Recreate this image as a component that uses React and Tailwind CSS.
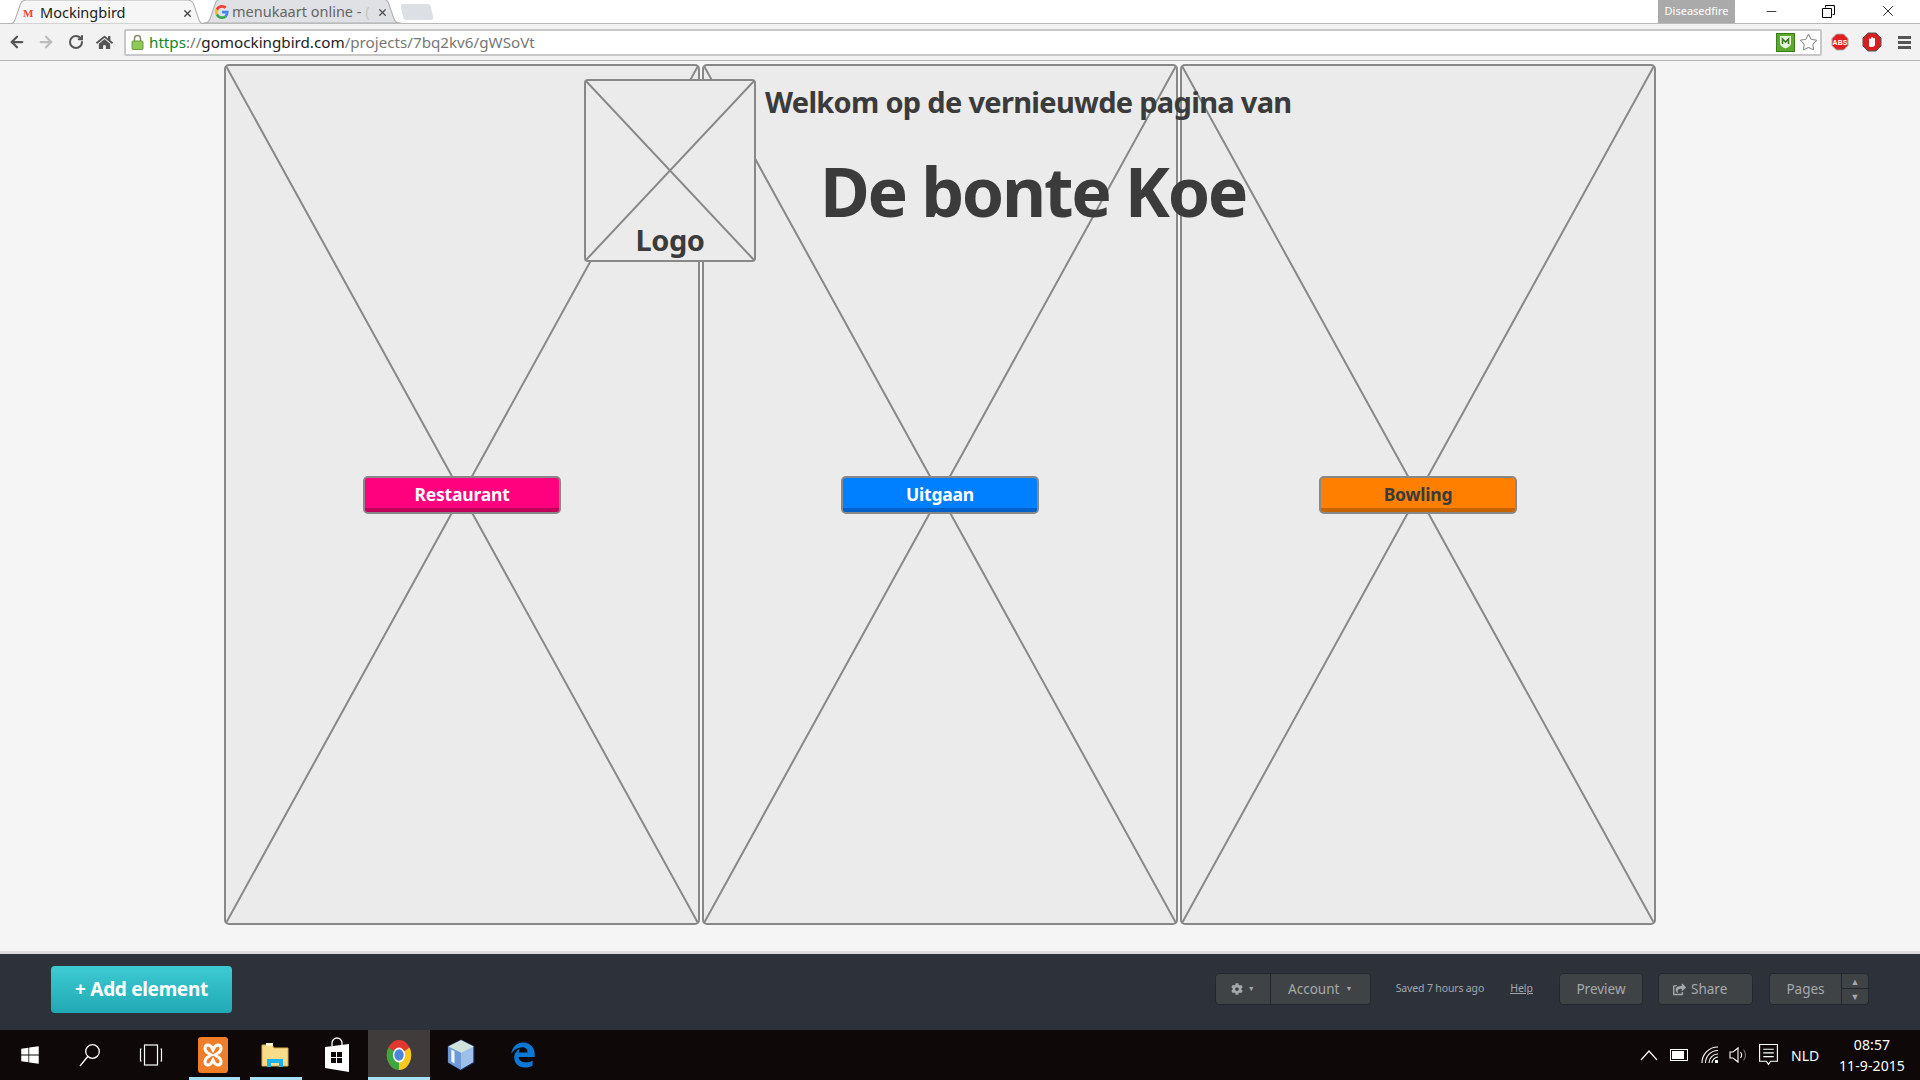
import React from "react";
import { ArrowLeft, ArrowRight, RotateCw, Star, Minus, X } from "lucide-react";
import { FaEdgeLegacy, FaWindows, FaHome, FaCog, FaShareSquare } from "react-icons/fa";

function CrossBox({ className }) {
  return (
    <svg
      className={`absolute inset-0 w-full h-full ${className || ""}`}
      viewBox="0 0 100 100"
      preserveAspectRatio="none"
    >
      <path d="M0 0 L100 100 M100 0 L0 100" stroke="#888888" strokeWidth="2" vectorEffect="non-scaling-stroke" fill="none" />
    </svg>
  );
}

function ImagePanel({ label, bg, under, text }) {
  return (
    <div className="relative w-[476px] h-[861px] bg-[#ebebeb] border-2 border-[#888888] rounded-[5px] flex items-center justify-center">
      <CrossBox />
      <div
        className={`relative w-[198px] h-[38px] border-2 border-[#888888] rounded-[5px] overflow-hidden flex items-center justify-center ${bg}`}
      >
        <div className={`absolute left-0 right-0 bottom-0 h-[4px] ${under}`} />
        <span className={`relative text-[17.500px] font-bold tracking-[-0.2px] ${text}`}>{label}</span>
      </div>
    </div>
  );
}

function TabShape({ fill, stroke }) {
  return (
    <svg className="absolute inset-0 w-full h-full" viewBox="0 0 190 24" preserveAspectRatio="none">
      <path d="M0 24 C5 24 6 22 7 19 L12 4 C13 1 15 0 18 0 L172 0 C175 0 177 1 178 4 L183 19 C184 22 185 24 190 24 Z" fill={fill} stroke={stroke} strokeWidth="1" />
    </svg>
  );
}

function GoogleG() {
  return (
    <svg width="14" height="14" viewBox="0 0 48 48" className="shrink-0">
      <path fill="#EA4335" d="M24 9.5c3.5 0 6.6 1.2 9.1 3.6l6.8-6.8C35.8 2.5 30.400 0 24 0 14.600 0 6.500 5.400 2.600 13.200l7.900 6.100C12.400 13.600 17.700 9.500 24 9.500z" />
      <path fill="#4285F4" d="M46.900 24.500c0-1.600-.1-3.100-.4-4.500H24v9h12.900c-.6 3-2.200 5.500-4.700 7.200l7.300 5.700c4.300-4 6.400-9.900 6.400-17.400z" />
      <path fill="#FBBC05" d="M10.500 28.700c-.5-1.500-.8-3-.8-4.700s.3-3.200.8-4.700l-7.900-6.100C.9 16.500 0 20.100 0 24s.9 7.500 2.600 10.800l7.900-6.100z" />
      <path fill="#34A853" d="M24 48c6.500 0 11.900-2.100 15.900-5.800l-7.300-5.700c-2 1.400-4.700 2.200-8.600 2.200-6.300 0-11.600-4.100-13.500-9.800l-7.900 6.100C6.500 42.600 14.600 48 24 48z" />
    </svg>
  );
}

function ChromeLogo() {
  return (
    <svg width="26" height="32" viewBox="0 0 32 32" preserveAspectRatio="none">
      <circle cx="16" cy="16" r="15" fill="#e0382e" />
      <path d="M16 16 L29 8.500 A15 15 0 0 1 16 31 Z" fill="#f7c820" />
      <path d="M16 16 L16 31 A15 15 0 0 1 3 8.500 Z" fill="#3da63e" />
      <circle cx="16" cy="16" r="7.500" fill="#ffffff" />
      <circle cx="16" cy="16" r="5.800" fill="#4a86d8" />
    </svg>
  );
}

function BrowserChrome() {
  return (
    <div className="h-[61px] shrink-0 bg-[#f2f2f2] border-b border-[#b4b4b4] font-['Noto_Sans',sans-serif]">
      <div className="h-[24px] bg-white border-b border-[#b9b9b9] flex items-end relative pl-[8px]">
        <div className="relative w-[198px] h-[24px] -mb-px flex items-center pl-[15px] pr-[8px] pt-[2px] z-10">
          <TabShape fill="#f6f6f6" stroke="#b0b0b0" />
          <span className="relative text-[#e8453c] text-[11px] font-bold font-['Liberation_Serif',serif] w-[17px]">M</span>
          <span className="relative text-[14.5px] text-[#222222] grow">Mockingbird</span>
          <X className="relative w-[11px] h-[11px] text-[#444444] mr-[5px]" strokeWidth={3} />
        </div>
        <div className="relative w-[198px] h-[24px] -ml-[3px] flex items-center pl-[12px] pr-[8px] pt-[2px]">
          <TabShape fill="#dfe1e5" stroke="#b0b0b0" />
          <span className="relative"><GoogleG /></span>
          <span className="relative text-[14.5px] text-[#666666] ml-[3px] grow whitespace-nowrap">
            menukaart online - <span className="text-[#c4c6ca]">(</span>
          </span>
          <X className="relative w-[11px] h-[11px] text-[#555555] mr-[5px] shrink-0" strokeWidth={3} />
        </div>
        <div className="w-[30px] h-[16px] ml-[1px] mb-[3px] bg-[#dcdfe4] rounded-[3px] skew-x-12" />
        <div className="ml-auto flex h-[24px] items-center">
          <div className="w-[77px] h-[24px] bg-[#aaaaaa] text-white text-[11px] flex items-center justify-center mr-[29px]">Diseasedfire</div>
          <Minus className="w-[15px] h-[15px] text-black mr-[43px]" strokeWidth={1.2} />
          <svg width="13" height="13" viewBox="0 0 13 13" className="mr-[44px]" fill="none" stroke="#000000">
            <path d="M3.500 2.500 V0.500 H12.500 V9.500 H10.500 M0.500 3.500 H9.500 V12.500 H0.500 Z" />
          </svg>
          <X className="w-[18px] h-[18px] text-black mr-[23px]" strokeWidth={1.1} />
        </div>
      </div>
      <div className="h-[36px] flex items-center pl-[8px]">
        <ArrowLeft className="w-[18px] h-[18px] text-[#555555]" strokeWidth={3} />
        <ArrowRight className="w-[18px] h-[18px] text-[#bdbdbd] ml-[11px]" strokeWidth={3} />
        <RotateCw className="w-[16px] h-[16px] text-[#555555] ml-[13px]" strokeWidth={3} />
        <FaHome className="w-[17px] h-[17px] text-[#555555] ml-[12px]" />
        <div className="ml-[11px] w-[1698px] h-[27px] bg-white border-2 border-[#c8c8c8] rounded-[2px] flex items-center pl-[5px] relative">
          <svg width="13" height="16" viewBox="0 0 13 16" className="shrink-0">
            <path d="M3.500 7 V4.500 a3 3 0 0 1 6 0 V7" fill="none" stroke="#8a8a6a" strokeWidth="1.500" />
            <rect x="1" y="7" width="11" height="8.500" rx="1" fill="#8ec95a" stroke="#6a9a40" />
          </svg>
          <span className="ml-[5px] text-[15.200px] whitespace-nowrap">
            <span className="text-[#0a8a2a]">https</span>
            <span className="text-[#777777]">://</span>
            <span className="text-[#222222]">gomockingbird.com</span>
            <span className="text-[#777777]">/projects/7bq2kv6/gWSoVt</span>
          </span>
          <div className="ml-auto mr-[25px] w-[19px] h-[19px] bg-[#5aab2a] border border-[#3c7a1a] flex items-center justify-center">
            <svg width="13" height="14" viewBox="0 0 13 14">
              <path d="M1 1 H12 V8 C12 11 9 12.500 6.500 13.500 C4 12.500 1 11 1 8 Z" fill="#e8f4e0" />
              <path d="M3.500 9 V4 L6.500 7 L9.500 4 V9" fill="none" stroke="#3c7a1a" strokeWidth="1.600" />
            </svg>
          </div>
          <Star className="absolute right-[2px] w-[19px] h-[19px] text-[#8a8a8a]" strokeWidth={1.3} />
        </div>
        <svg width="18" height="18" viewBox="0 0 18 18" className="ml-[9px]">
          <path d="M5.500 1 H12.500 L17 5.500 V12.500 L12.500 17 H5.500 L1 12.500 V5.500 Z" fill="#e02020" stroke="#aaaaaa" />
          <text x="9" y="11.500" textAnchor="middle" fontSize="7" fontWeight="700" fill="#ffffff" fontFamily="Liberation Sans">ABS</text>
        </svg>
        <svg width="20" height="20" viewBox="0 0 20 20" className="ml-[13px]">
          <path d="M6 1 H14 L19 6 V14 L14 19 H6 L1 14 V6 Z" fill="#d81f1f" stroke="#555555" />
          <path d="M7 14 V7.500 a1 1 0 0 1 2 0 V6 a1 1 0 0 1 2 0 V7 a1 1 0 0 1 2 0 V12 C13 14 12 15 10 15 H8 Z" fill="#ffffff" />
        </svg>
        <div className="ml-[16px] w-[13px] flex flex-col gap-[2px]">
          <div className="h-[3px] bg-[#555555]" />
          <div className="h-[3px] bg-[#555555]" />
          <div className="h-[3px] bg-[#555555]" />
        </div>
      </div>
    </div>
  );
}

function Canvas() {
  return (
    <div className="relative flex-1 bg-[#f5f5f5] pl-[224px] pt-[3px] flex gap-[2px] font-['Noto_Sans',sans-serif]">
      <ImagePanel label="Restaurant" bg="bg-[#ff007f]" under="bg-[#c4005f]" text="text-white" />
      <ImagePanel label="Uitgaan" bg="bg-[#007fff]" under="bg-[#0062c8]" text="text-white" />
      <ImagePanel label="Bowling" bg="bg-[#ff7f00]" under="bg-[#c86400]" text="text-[#3b3b3b]" />

      <div className="absolute left-[584px] top-[18px] w-[172px] h-[183px] bg-[#ebebeb] border-2 border-[#888888] rounded-[4px] flex items-end justify-center">
        <CrossBox />
        <span className="relative text-[29px] leading-[40px] font-bold text-[#3b3b3b] tracking-[-0.5px]">Logo</span>
      </div>
      <div className="absolute left-[765px] top-[21px] text-[29px] leading-[40px] font-bold text-[#3b3b3b] whitespace-nowrap tracking-[-0.7px]">
        Welkom op de vernieuwde pagina van
      </div>
      <div className="absolute left-[820px] top-[88px] text-[68px] leading-[84px] font-bold text-[#3b3b3b] whitespace-nowrap tracking-[-2.3px]">
        De bonte Koe
      </div>
    </div>
  );
}

function DarkBtn({ className, children }) {
  return (
    <div className={`h-[32px] bg-[#404346] border border-[#24282e] rounded-[4px] flex items-center text-[#a5a8aa] text-[13.500px] ${className || ""}`}>
      {children}
    </div>
  );
}

function EditorBar() {
  return (
    <div className="h-[79px] shrink-0 bg-[#2c313a] border-t-[3px] border-[#dddddd] flex items-center font-['Noto_Sans',sans-serif] pl-[51px] pr-[51px] pb-[6px]">
      <div className="w-[181px] h-[47px] rounded-[4px] bg-gradient-to-b from-[#3dcbd2] to-[#20a9b4] text-white text-[19px] font-bold flex items-center justify-center tracking-[-0.3px]">
        + Add element
      </div>
      <DarkBtn className="ml-auto w-[156px]">
        <div className="w-[55px] h-full border-r border-[#24282e] flex items-center justify-center gap-[5px]">
          <FaCog className="w-[12px] h-[12px]" />
          <span className="text-[7px]">▼</span>
        </div>
        <div className="grow flex items-center justify-center gap-[6px]">
          Account <span className="text-[7px]">▼</span>
        </div>
      </DarkBtn>
      <span className="ml-[25px] text-[10.500px] tracking-[-0.15px] text-[#a5a8aa]">Saved 7 hours ago</span>
      <span className="ml-[26px] text-[10.500px] text-[#a5a8aa] underline">Help</span>
      <DarkBtn className="ml-[26px] w-[84px] justify-center">Preview</DarkBtn>
      <DarkBtn className="ml-[15px] w-[95px] pl-[14px] gap-[5px]">
        <FaShareSquare className="w-[13px] h-[13px]" />
        <span>Share</span>
      </DarkBtn>
      <DarkBtn className="ml-[16px] w-[100px]">
        <div className="w-[71px] text-center">Pages</div>
        <div className="grow h-full border-l border-[#24282e] flex flex-col text-[9px] leading-none">
          <div className="h-1/2 border-b border-[#24282e] flex items-center justify-center">▲</div>
          <div className="h-1/2 flex items-center justify-center">▼</div>
        </div>
      </DarkBtn>
    </div>
  );
}

function TaskIcon({ children, open, active }) {
  return (
    <div className={`relative w-[61.500px] h-full shrink-0 flex items-center justify-center ${active ? "bg-[#413c3c]" : ""}`}>
      {children}
      {open && <div className={`absolute bottom-0 h-[3px] bg-[#a6e0f5] ${active ? "inset-x-0" : "inset-x-[5px]"}`} />}
    </div>
  );
}

function Taskbar() {
  return (
    <div className="h-[50px] shrink-0 bg-[#0e0808] flex items-center -ml-px text-white font-['Noto_Sans',sans-serif]">
      <TaskIcon><FaWindows className="w-[20px] h-[20px]" /></TaskIcon>
      <TaskIcon>
        <svg width="22" height="24" viewBox="0 0 22 24" fill="none" stroke="#ffffff" strokeWidth="1.300" className="-ml-[3px]">
          <circle cx="13.500" cy="8.500" r="6.800" />
          <path d="M8.800 13.500 L1 23" />
        </svg>
      </TaskIcon>
      <TaskIcon>
        <svg width="24" height="22" viewBox="0 0 24 22" fill="none" stroke="#ffffff" strokeWidth="1.200" className="-ml-[4px]">
          <rect x="5.500" y="1" width="13" height="20" />
          <path d="M2.500 5 H1.500 V17 H2.500 M21.500 5 H22.500 V17 H21.500" />
        </svg>
      </TaskIcon>
      <TaskIcon open>
        <div className="w-[30px] h-[36px] -ml-[2px] rounded-[3px] bg-[#f07d28] flex items-center justify-center">
          <svg width="22" height="26" viewBox="0 0 22 26" fill="none" stroke="#ffffff" strokeWidth="3">
            <path d="M6 3 C2 3 2 9 6 11 L9 13 L6 15 C2 17 2 23 6 23 C9 23 10 20 11 18 C12 20 13 23 16 23 C20 23 20 17 16 15 L13 13 L16 11 C20 9 20 3 16 3 C13 3 12 6 11 8 C10 6 9 3 6 3 Z" />
          </svg>
        </div>
      </TaskIcon>
      <TaskIcon open>
        <svg width="28" height="28" viewBox="0 0 28 28" className="-ml-[2px]">
          <path d="M1 4 H11 L13 7 H27 V25 H1 Z" fill="#f7dc8a" stroke="#d8b050" />
          <path d="M5 2 H12 V5 H5 Z" fill="#fff6d0" />
          <path d="M6 26 V18 H22 V26 H18 V22 H10 V26 Z" fill="#1ab4f0" />
        </svg>
      </TaskIcon>
      <TaskIcon>
        <svg width="26" height="36" viewBox="0 0 26 36">
          <path d="M8 9 V6 a5 5 0 0 1 10 0 V9" fill="none" stroke="#ffffff" strokeWidth="1.300" />
          <path d="M1 10 L25 7 V35 L1 31 Z" fill="#ffffff" />
          <path d="M7 15 H12 V20 H7 Z M13 15 H18 V20 H13 Z M7 21 H12 V26 H7 Z M13 21 H18 V26 H13 Z" fill="#0e0808" />
        </svg>
      </TaskIcon>
      <TaskIcon open active><ChromeLogo /></TaskIcon>
      <TaskIcon>
        <svg width="28" height="34" viewBox="0 0 26 30" className="ml-[2px]">
          <path d="M13 1 L25 7 V22 L13 29 L1 22 V7 Z" fill="#9cc0ea" stroke="#1c2a60" />
          <path d="M13 1 L25 7 L13 13 L1 7 Z" fill="#cfe3dc" />
          <path d="M1 7 L13 13 V29 L1 22 Z" fill="#6e9ad8" />
          <path d="M4 10 L7 11.500 V23 L4 21 Z" fill="#eef6ff" />
        </svg>
      </TaskIcon>
      <TaskIcon><FaEdgeLegacy className="w-[26px] h-[30px] ml-[2px] text-[#0a78d4]" /></TaskIcon>

      <div className="ml-auto flex items-center h-full pr-[14px] relative">
        <svg width="18" height="12" viewBox="0 0 18 12" fill="none" stroke="#ffffff" strokeWidth="1.200">
          <path d="M1 11 L9 2 L17 11" />
        </svg>
        <div className="ml-[12px] w-[18px] h-[12px] border border-white flex items-center pl-[1px] pr-[3px] py-[1px]">
          <div className="w-full h-full bg-white" />
        </div>
        <svg width="18" height="18" viewBox="0 0 18 18" fill="none" stroke="#ffffff" strokeWidth="1.100" className="ml-[13px]">
          <path d="M1 17 C1 8 8 1 17 1 M4.500 17 C4.500 10 10 4.500 17 4.500 M8 17 C8 12 12 8 17 8 M11 17 C11 14 14 11 17 11" />
          <rect x="14" y="14" width="3" height="3" fill="#ffffff" stroke="none" />
        </svg>
        <svg width="20" height="18" viewBox="0 0 20 18" fill="none" stroke="#ffffff" strokeWidth="1.100" className="ml-[10px]">
          <path d="M1 6 H4 L9 2 V16 L4 12 H1 Z" />
          <path d="M11.500 6 C13 8 13 10 11.500 12" />
          <path d="M14.500 3.500 C17 7 17 11 14.500 14.500" stroke="#777777" />
        </svg>
        <svg width="19" height="22" viewBox="0 0 18 21" fill="none" stroke="#ffffff" strokeWidth="1.100" className="ml-[10px]">
          <path d="M0.500 0.500 H17.500 V16.500 H11 L9 19.500 L7 16.500 H0.500 Z M4 5 H14 M4 8.500 H14 M4 12 H14" />
        </svg>
        <span className="ml-[13px] text-[14px] w-[33px]">NLD</span>
        <div className="ml-[14px] w-[68px] flex flex-col items-center text-[14px] leading-[21px] tracking-[0.1px]">
          <span>08:57</span>
          <span>11-9-2015</span>
        </div>
      </div>
    </div>
  );
}

export default function App() {
  return (
    <div className="h-screen flex flex-col overflow-hidden">
      <BrowserChrome />
      <Canvas />
      <EditorBar />
      <Taskbar />
    </div>
  );
}
